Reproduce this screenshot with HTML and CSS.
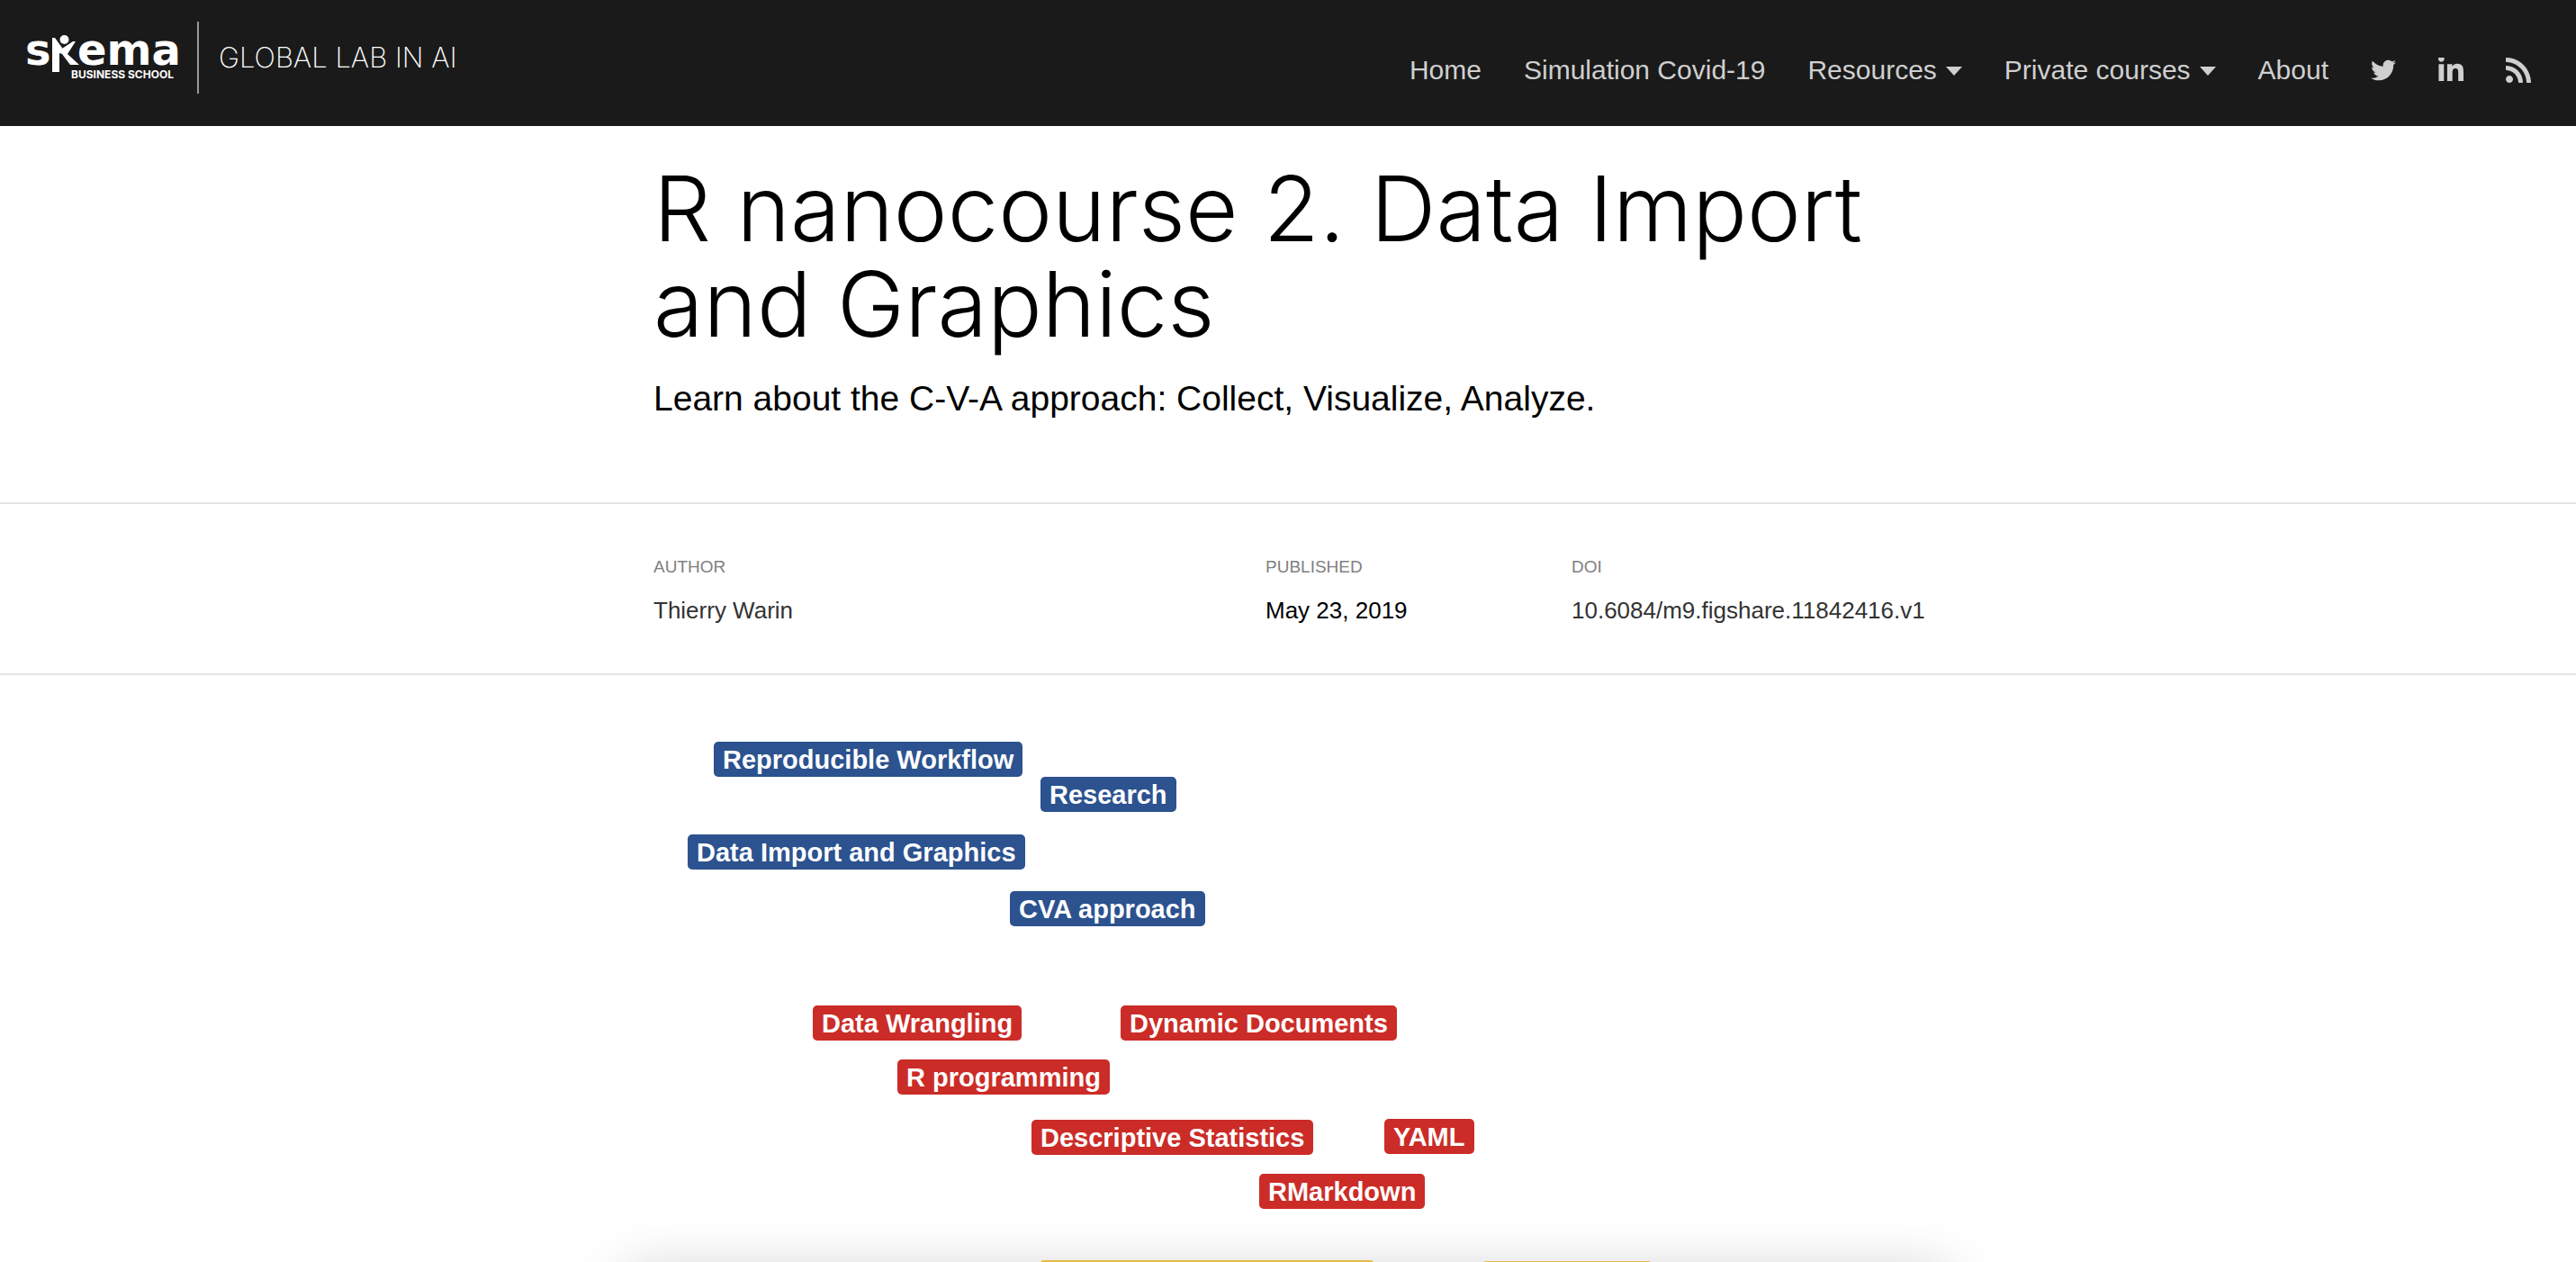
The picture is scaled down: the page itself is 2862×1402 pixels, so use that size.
FILE: index.html
```html
<!DOCTYPE html>
<html lang="en">
<head>
<meta charset="utf-8">
<title>R nanocourse 2. Data Import and Graphics</title>
<link rel="stylesheet" href="styles.css">
</head>
<body>
<header class="site-header">
  <a class="brand" href="#">
    <svg class="brand-logo" viewBox="0 0 176 80" role="img" aria-label="Skema Business School">
      <g fill="#fff">
        <text class="logo-name" x="-1" y="48">s</text>
        <text class="logo-name" x="57" y="48">ema</text>
        <path d="M30 18h2l8 11-1 3-2 2v22h-8V18z"/>
        <path d="M36 32l7-4 9-6h3l-9 14 13 12h-10l-9-12-3-1z"/>
        <circle cx="42.500" cy="20" r="5"/>
        <text class="logo-school" x="50" y="63">BUSINESS SCHOOL</text>
      </g>
    </svg>
    <span class="brand-divider"></span>
    <span class="brand-title">GLOBAL LAB IN AI</span>
  </a>
  <nav class="site-nav">
    <a href="#">Home</a>
    <a href="#">Simulation Covid-19</a>
    <button type="button">Resources <svg class="caret" viewBox="0 0 18 12"><path d="M0 2h18l-9 10z"/></svg></button>
    <button type="button">Private courses <svg class="caret" viewBox="0 0 18 12"><path d="M0 2h18l-9 10z"/></svg></button>
    <a href="#">About</a>
    <a href="#" aria-label="Twitter"><svg class="icon" viewBox="0 0 512 512"><path d="M459.370 151.716c.325 4.548.325 9.097.325 13.645 0 138.720-105.583 298.558-298.558 298.558-59.452 0-114.680-17.219-161.137-47.106 8.447.974 16.568 1.299 25.340 1.299 49.055 0 94.213-16.568 130.274-44.832-46.132-.975-84.792-31.188-98.112-72.772 6.498.974 12.995 1.624 19.818 1.624 9.421 0 18.843-1.300 27.614-3.573-48.081-9.747-84.143-51.980-84.143-102.985v-1.299c13.969 7.797 30.214 12.670 47.431 13.319-28.264-18.843-46.781-51.005-46.781-87.391 0-19.492 5.197-37.360 14.294-52.954 51.655 63.675 129.300 105.258 216.365 109.807-1.624-7.797-2.599-15.918-2.599-24.040 0-57.828 46.782-104.934 104.934-104.934 30.213 0 57.502 12.670 76.670 33.137 23.715-4.548 46.456-13.320 66.599-25.340-7.798 24.366-24.366 44.833-46.132 57.827 21.117-2.273 41.584-8.122 60.426-16.243-14.292 20.791-32.161 39.308-52.628 54.253z"/></svg></a>
    <a href="#" aria-label="LinkedIn"><svg class="icon" viewBox="0 0 448 448"><path d="M100.280 416H7.400V116.900h92.880zM53.790 76.100C24.090 76.100 0 51.500 0 21.800a53.790 53.790 0 0 1 107.580 0c0 29.700-24.100 54.300-53.790 54.300zM447.900 416h-92.680V270.400c0-34.700-.7-79.200-48.290-79.200-48.290 0-55.690 37.700-55.690 76.700V416h-92.780V116.900h89.080v40.800h1.300c12.400-23.500 42.690-48.300 87.880-48.300 94 0 111.280 61.900 111.280 142.300V416z"/></svg></a>
    <a href="#" aria-label="RSS"><svg class="icon" viewBox="0 32 448 448"><path d="M128.081 415.959c0 35.369-28.672 64.041-64.041 64.041S0 451.328 0 415.959s28.672-64.041 64.041-64.041 64.040 28.673 64.040 64.041zm175.660 47.250c-8.354-154.600-132.185-278.587-286.950-286.950C7.656 175.765 0 183.105 0 192.253v48.069c0 8.415 6.490 15.472 14.887 16.018 111.832 7.284 201.473 96.702 208.772 208.772.547 8.397 7.604 14.887 16.018 14.887h48.069c9.149.001 16.489-7.655 15.995-16.790zm144.249.288C439.596 229.677 251.465 40.445 16.503 32.010 7.473 31.686 0 38.981 0 48.016v48.068c0 8.625 6.835 15.645 15.453 15.999 191.179 7.839 344.627 161.316 352.465 352.465.353 8.618 7.373 15.453 15.999 15.453h48.068c9.034-.001 16.329-7.474 16.005-16.504z"/></svg></a>
  </nav>
</header>

<main class="page">
  <section class="intro container">
    <h1>R nanocourse 2. Data Import and Graphics</h1>
    <p>Learn about the C-V-A approach: Collect, Visualize, Analyze.</p>
  </section>

  <section class="byline">
    <dl class="container byline-grid">
      <div><dt>AUTHOR</dt><dd><a href="#">Thierry Warin</a></dd></div>
      <div><dt>PUBLISHED</dt><dd>May 23, 2019</dd></div>
      <div><dt>DOI</dt><dd><a href="#">10.6084/m9.figshare.11842416.v1</a></dd></div>
    </dl>
  </section>

  <section class="map-area">
    <div class="container map">
      <div class="map-shadow"></div>
      <span class="tag blue n-workflow">Reproducible Workflow</span>
      <span class="tag blue n-research">Research</span>
      <span class="tag blue n-import">Data Import and Graphics</span>
      <span class="tag blue n-cva">CVA approach</span>
      <span class="tag red n-wrangling">Data Wrangling</span>
      <span class="tag red n-documents">Dynamic Documents</span>
      <span class="tag red n-programming">R programming</span>
      <span class="tag red n-statistics">Descriptive Statistics</span>
      <span class="tag red n-yaml">YAML</span>
      <span class="tag red n-rmarkdown">RMarkdown</span>
      <span class="tag gold n-gold-wide"></span>
      <span class="tag gold n-gold-small"></span>
    </div>
  </section>
</main>
</body>
</html>
```
FILE: styles.css
```css
* {
  box-sizing: border-box;
}

body {
  margin: 0;
  height: 100vh;
  display: flex;
  flex-direction: column;
  overflow: hidden;
  background: #fff;
  color: #000;
  font-family: "Liberation Sans", Arial, sans-serif;
}

a {
  color: inherit;
  text-decoration: none;
}

.container {
  width: 100%;
  max-width: 1410px;
  margin: 0 auto;
}

/* Header */
.site-header {
  display: flex;
  justify-content: space-between;
  flex-shrink: 0;
  height: 140px;
  padding: 24px 50px 0 29px;
  background: #1a1a1a;
  color: #cfcfcf;
}

.brand {
  display: flex;
  align-items: center;
  height: 80px;
}

.brand-logo {
  width: 176px;
  height: 80px;
  overflow: visible;
}

.logo-name {
  font: bold 48px "DejaVu Sans", sans-serif;
}

.logo-school {
  font: bold 12px Inter, sans-serif;
}

.brand-divider {
  width: 2px;
  height: 80px;
  margin: 0 22px 0 14px;
  background: #999;
}

.brand-title {
  color: #fff;
  font: 200 31px/40px Inter, sans-serif;
}

.site-nav {
  display: flex;
  align-items: center;
  gap: 47px;
  height: 108px;
}

.site-nav a,
.site-nav button {
  display: flex;
  align-items: center;
  gap: 10px;
  padding: 0;
  border: 0;
  background: none;
  color: inherit;
  font: 30px/36px "Liberation Sans", Arial, sans-serif;
}

.site-nav svg {
  fill: currentColor;
}

.caret {
  width: 18px;
  height: 12px;
}

.icon {
  width: 28px;
  height: 28px;
}

/* Title */
.page {
  display: flex;
  flex-direction: column;
  flex: 1;
}

.intro {
  height: 418px;
  padding-top: 38px;
}

.intro h1 {
  margin: 0;
  font: 300 101px/106px Inter, sans-serif;
}

.intro p {
  margin: 28px 0 0;
  font-size: 39px;
  line-height: 50px;
}

/* Byline */
.byline {
  padding: 58px 0 54px;
  border-top: 2px solid #e5e5e5;
  border-bottom: 2px solid #e5e5e5;
}

.byline-grid {
  display: grid;
  grid-template-columns: 2fr 1fr 390px;
}

.byline dt {
  color: #808080;
  font-size: 19px;
  line-height: 24px;
}

.byline dd {
  margin: 20px 0 0;
  font-size: 26px;
  line-height: 32px;
}

.byline dd a {
  color: #333;
}

/* Topic map */
.map-area {
  flex: 1;
  overflow: hidden;
}

.map {
  position: relative;
  height: 100%;
}

.map-shadow {
  position: absolute;
  top: 666px;
  left: -31px;
  right: -29px;
  height: 200px;
  box-shadow: 0 0 60px rgba(0, 0, 0, 0.22);
}

.tag {
  position: absolute;
  height: 39px;
  padding: 0 10px;
  border-radius: 5px;
  color: #fff;
  font-size: 29px;
  font-weight: bold;
  line-height: 40px;
  white-space: nowrap;
}

.blue { background: #2c528f; }
.red { background: #cb2c27; }
.gold { background: #e8b949; }

.n-workflow { left: 67px; top: 74px; }
.n-research { left: 430px; top: 113px; }
.n-import { left: 38px; top: 177px; }
.n-cva { left: 396px; top: 240px; }
.n-wrangling { left: 177px; top: 367px; }
.n-documents { left: 519px; top: 367px; }
.n-programming { left: 271px; top: 427px; }
.n-statistics { left: 420px; top: 494px; }
.n-yaml { left: 812px; top: 493px; }
.n-rmarkdown { left: 673px; top: 554px; }
.n-gold-wide { left: 429px; top: 650px; width: 372px; }
.n-gold-small { left: 920px; top: 651px; width: 190px; }
```
